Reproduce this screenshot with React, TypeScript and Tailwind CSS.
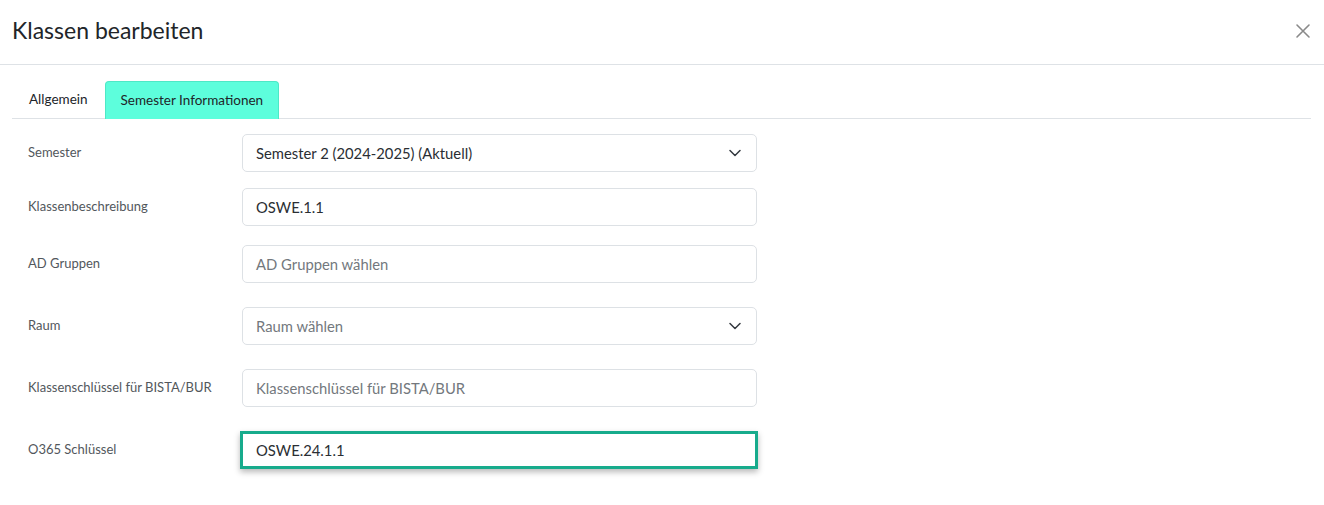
import React from "react";

const Chevron = () => (
  <svg width="12" height="8" viewBox="0 0 12 8" fill="none" className="shrink-0">
    <path d="M1 1.5 L6 6.5 L11 1.5" stroke="#343a40" strokeWidth="1.5" strokeLinecap="round" strokeLinejoin="round" />
  </svg>
);

function Row({
  label,
  children,
  mt,
}: {
  label: string;
  children: React.ReactNode;
  mt: string;
}) {
  return (
    <div className={`flex items-center ${mt}`}>
      <div className="w-[230px] shrink-0 pl-4 text-[13px] text-[#52575c]">{label}</div>
      {children}
    </div>
  );
}

function Box({
  value,
  placeholder,
  select,
}: {
  value?: string;
  placeholder?: string;
  select?: boolean;
}) {
  return (
    <div className="w-[515px] h-[38px] border border-[#dde1e5] rounded-[5px] bg-white flex items-center pl-[13px] pr-[15px] justify-between">
      <span className={`text-[14.8px] ${value ? "text-[#2a2e33]" : "text-[#73787d]"}`}>
        {value ?? placeholder}
      </span>
      {select && <Chevron />}
    </div>
  );
}

export default function App() {
  return (
    <div
      className="w-[1324px] h-[505px] bg-white"
      style={{ fontFamily: "Lato, 'Noto Sans', sans-serif" }}
    >
      <div className="h-[65px] border-b border-[#dee2e6] flex items-center justify-between pl-3 pr-[13px]">
        <h1 className="text-[23px] text-[#212529] leading-none -mt-[4px]">Klassen bearbeiten</h1>
        <svg width="16" height="16" viewBox="0 0 16 16" className="-mt-[3px]">
          <path d="M2 2 L14 14 M14 2 L2 14" stroke="#8a8a8a" strokeWidth="1.6" strokeLinecap="round" />
        </svg>
      </div>
      <div className="pl-3 pr-[13px]">
        <div className="mt-4 flex items-end border-b border-[#dee2e6] h-[38px]">
          <div className="h-[37px] px-[17px] flex items-center text-[13.5px] text-[#212529]">Allgemein</div>
          <div className="h-[38px] -mb-px px-[15px] flex items-center text-[13.5px] text-[#212529] bg-[#5dfedc] border border-[#4ee8c6] border-b-0 rounded-t-[4px]">
            Semester Informationen
          </div>
        </div>
        <div className="pt-[15px]">
          <Row label="Semester" mt="mt-0">
            <Box value="Semester 2 (2024-2025) (Aktuell)" select />
          </Row>
          <Row label="Klassenbeschreibung" mt="mt-4">
            <Box value="OSWE.1.1" />
          </Row>
          <Row label="AD Gruppen" mt="mt-[19px]">
            <Box placeholder="AD Gruppen wählen" />
          </Row>
          <Row label="Raum" mt="mt-6">
            <Box placeholder="Raum wählen" select />
          </Row>
          <Row label="Klassenschlüssel für BISTA/BUR" mt="mt-6">
            <Box placeholder="Klassenschlüssel für BISTA/BUR" />
          </Row>
          <Row label="O365 Schlüssel" mt="mt-6">
            <div className="-ml-[2px] w-[518px] h-[38px] border-[3px] border-[#17ab8c] bg-white flex items-center pl-[13px] shadow-[0_3px_6px_rgba(0,0,0,0.28)]">
              <span className="text-[14.8px] text-[#2a2e33]">OSWE.24.1.1</span>
            </div>
          </Row>
        </div>
      </div>
    </div>
  );
}
